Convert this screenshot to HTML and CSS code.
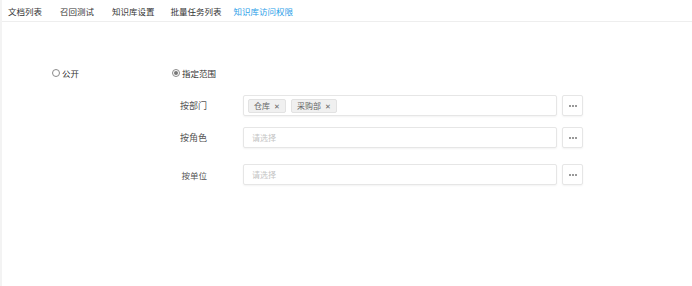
FILE: index.html
```html
<!DOCTYPE html>
<html lang="zh-CN">
<head>
    <meta charset="UTF-8">
    <title>知识库访问权限</title>
    <link rel="stylesheet" href="styles.css">
</head>
<body>
    <div class="page">
        <nav class="tabs">
            <a href="#">文档列表</a>
            <a href="#">召回测试</a>
            <a href="#">知识库设置</a>
            <a href="#">批量任务列表</a>
            <a href="#" class="active">知识库访问权限</a>
        </nav>

        <section class="content">
            <div class="radios">
                <label class="radio"><span class="dot"></span>公开</label>
                <label class="radio checked"><span class="dot"></span>指定范围</label>
            </div>

            <div class="row">
                <span class="label">按部门</span>
                <div class="select">
                    <span class="tag">仓库<i>✕</i></span>
                    <span class="tag">采购部<i>✕</i></span>
                </div>
                <span class="more"><b></b><b></b><b></b></span>
            </div>

            <div class="row">
                <span class="label">按角色</span>
                <div class="select"><span class="placeholder">请选择</span></div>
                <span class="more"><b></b><b></b><b></b></span>
            </div>

            <div class="row row-last">
                <span class="label small">按单位</span>
                <div class="select"><span class="placeholder">请选择</span></div>
                <span class="more"><b></b><b></b><b></b></span>
            </div>
        </section>
    </div>
</body>
</html>
```

FILE: styles.css
```css
body {
    margin: 0;
    padding: 0;
    background-color: #ffffff;
    font-family: "Noto Sans CJK SC", "Liberation Sans", sans-serif;
    color: #333;
}

.page {
    height: 286px;
    border-left: 2px solid #f3f3f3;
    box-sizing: border-box;
}

.tabs {
    display: flex;
    align-items: center;
    height: 21px;
    padding: 0 6px;
    border-bottom: 1px solid #eeeeee;
    font-size: 8.5px;
}

.tabs a {
    color: #333;
    text-decoration: none;
    margin-right: 18px;
}

.tabs a:nth-child(3) {
    margin-right: 16px;
}

.tabs a:nth-child(4) {
    margin-right: 12px;
}

.tabs a.active {
    color: #2a9ee8;
}

.content {
    padding-top: 45px;
}

.radios {
    display: flex;
    align-items: center;
    height: 12px;
    padding-left: 50px;
    font-size: 8.5px;
}

.radio {
    display: flex;
    align-items: center;
    margin-right: 93px;
}

.radio .dot {
    width: 6px;
    height: 6px;
    border: 1px solid #8a8a8a;
    border-radius: 50%;
    margin-right: 2px;
    position: relative;
}

.radio.checked .dot::after {
    content: '';
    position: absolute;
    top: 1px;
    left: 1px;
    width: 4px;
    height: 4px;
    border-radius: 50%;
    background-color: #777;
}

.row {
    display: flex;
    align-items: center;
    margin-top: 11px;
    margin-left: 167px;
}

.radios + .row {
    margin-top: 16px;
}

.row-last {
    margin-top: 16px;
}

.label {
    width: 38px;
    text-align: right;
    font-size: 9px;
    color: #555;
    margin-right: 36px;
}

.label.small {
    font-size: 8.5px;
}

.select {
    width: 314px;
    height: 21px;
    border: 1px solid #e6e6e6;
    border-radius: 2px;
    box-sizing: border-box;
    box-shadow: 0 1px 2px rgba(0, 0, 0, 0.05);
    display: flex;
    align-items: center;
    padding: 0 4px;
    font-size: 8px;
}

.placeholder {
    color: #c4c4c4;
    padding-left: 4px;
}

.tag {
    display: flex;
    align-items: center;
    height: 14px;
    padding: 0 5px;
    margin-right: 5px;
    background-color: #f0f0f0;
    border: 1px solid #e2e2e2;
    border-radius: 2px;
    box-sizing: border-box;
    color: #666;
}

.tag i {
    font-style: normal;
    font-size: 7px;
    margin-left: 4px;
    color: #666;
}

.more {
    width: 21px;
    height: 21px;
    margin-left: 5px;
    border: 1px solid #e6e6e6;
    border-radius: 2px;
    box-sizing: border-box;
    box-shadow: 0 1px 2px rgba(0, 0, 0, 0.05);
    display: flex;
    align-items: center;
    justify-content: center;
    gap: 1px;
}

.more b {
    width: 2px;
    height: 2px;
    background-color: #999;
}
```
